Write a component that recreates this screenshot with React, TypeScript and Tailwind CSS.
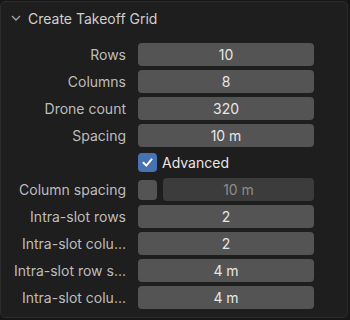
import React from "react";

const font = { fontFamily: "Inter, 'Noto Sans', sans-serif" };

const Field: React.FC<{ value: string }> = ({ value }) => (
  <div className="h-[23px] w-[176px] rounded-[4px] bg-[#545454] flex items-center justify-center text-[14px] text-[#e6e6e6]">
    {value}
  </div>
);

const Row: React.FC<{ label: string; children: React.ReactNode }> = ({ label, children }) => (
  <div className="flex items-center h-[23px] gap-[12px]">
    <div className="w-[125px] text-right text-[14px] text-[#bdbdbd] whitespace-nowrap">{label}</div>
    {children}
  </div>
);

const rows1 = [
  ["Rows", "10"],
  ["Columns", "8"],
  ["Drone count", "320"],
  ["Spacing", "10 m"],
];

const rows2 = [
  ["Intra-slot rows", "2"],
  ["Intra-slot colu...", "2"],
  ["Intra-slot row s...", "4 m"],
  ["Intra-slot colu...", "4 m"],
];

export default function App() {
  return (
    <div className="w-[350px] h-[320px] bg-[#161616] pt-px pl-0" style={font}>
      <div className="w-[348px] h-[317px] bg-[#1e1e1e] border border-[#2b2b2b] rounded-[5px]">
        {/* header */}
        <div className="h-[32px] flex items-center pl-[9px] gap-[6px]">
          <svg width="12" height="12" viewBox="0 0 12 12" fill="none">
            <path d="M2 4 L6 8 L10 4" stroke="#a8a8a8" strokeWidth="1.3" />
          </svg>
          <span className="text-[14px] text-[#cfcfcf]">Create Takeoff Grid</span>
        </div>

        <div className="flex flex-col gap-[4px] pt-[9px]">
          {rows1.map(([l, v]) => (
            <Row key={l} label={l}>
              <Field value={v} />
            </Row>
          ))}

          <Row label="">
            <div className="flex items-center gap-[5px]">
              <div className="w-[19px] h-[19px] rounded-[4px] bg-[#4772b3] flex items-center justify-center">
                <svg width="13" height="13" viewBox="0 0 13 13" fill="none">
                  <path d="M2.5 6.8 L5.3 9.6 L10.6 3.4" stroke="#ffffff" strokeWidth="2" strokeLinecap="round" strokeLinejoin="round" />
                </svg>
              </div>
              <span className="text-[14px] text-[#e6e6e6]">Advanced</span>
            </div>
          </Row>

          <Row label="Column spacing">
            <div className="flex items-center gap-[6px]">
              <div className="w-[19px] h-[20px] rounded-[4px] bg-[#545454]" />
              <div className="h-[23px] w-[151px] rounded-[4px] bg-[#3c3c3c] flex items-center justify-center text-[14px] text-[#8c8c8c]">
                10 m
              </div>
            </div>
          </Row>

          {rows2.map(([l, v], i) => (
            <Row key={i} label={l}>
              <Field value={v} />
            </Row>
          ))}
        </div>
      </div>
    </div>
  );
}
